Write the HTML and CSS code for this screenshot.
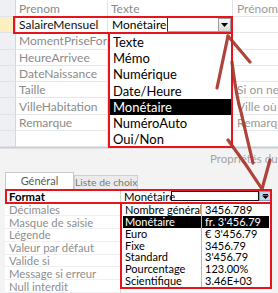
FILE: index.html
```html
<!DOCTYPE html>
<html lang="fr">
<head>
<meta charset="utf-8">
<title>Type de données Monétaire</title>
<link rel="stylesheet" href="styles.css">
</head>
<body>
<div class="screen">
  <div class="design">
    <div class="sel"></div><div class="cell muted">Prenom</div><div class="cell muted">Texte</div><div class="cell desc">Prénom</div>
    <div class="sel current"></div><div class="cell strong">SalaireMensuel</div>
    <div class="cell combo">
      <span class="combo-text">Monétaire</span><span class="combo-edit"></span>
      <span class="combo-btn"><svg width="7" height="4" viewBox="0 0 7 4"><path d="M0 0H7L3.5 4Z" fill="#000"/></svg></span>
    </div><div class="cell desc"></div>
    <div class="sel"></div><div class="cell muted">MomentPriseFor</div><div class="cell"></div><div class="cell desc"></div>
    <div class="sel"></div><div class="cell muted">HeureArrivee</div><div class="cell"></div><div class="cell desc"></div>
    <div class="sel"></div><div class="cell muted">DateNaissance</div><div class="cell"></div><div class="cell desc"></div>
    <div class="sel"></div><div class="cell muted">Taille</div><div class="cell"></div><div class="cell desc">Si on ne</div>
    <div class="sel"></div><div class="cell muted">VilleHabitation</div><div class="cell"></div><div class="cell desc">Ville où</div>
    <div class="sel"></div><div class="cell muted">Remarque</div><div class="cell"></div><div class="cell desc">Remarque</div>
    <div class="sel"></div><div class="cell"></div><div class="cell"></div><div class="cell desc"></div>
  </div>

  <div class="props">
    <div class="props-head"><span class="props-title">Propriétés du champ</span></div>
    <div class="tabs">
      <div class="tab active">Général</div>
      <div class="tab">Liste de choix</div>
    </div>
    <div class="sheet">
      <div class="plabel bold">Format</div>
      <div class="pvalue combo2">
        <span class="combo2-text">Monétaire</span><span class="combo2-edit"></span>
        <span class="combo2-btn"><svg width="7" height="5" viewBox="0 0 7 5"><path d="M1 0H6V1H1Z M0 1.5H7L3.5 5Z" fill="#000"/></svg></span>
      </div>
      <div class="plabel">Décimales</div><div class="pvalue"></div>
      <div class="plabel">Masque de saisie</div><div class="pvalue"></div>
      <div class="plabel">Légende</div><div class="pvalue"></div>
      <div class="plabel">Valeur par défaut</div><div class="pvalue"></div>
      <div class="plabel">Valide si</div><div class="pvalue"></div>
      <div class="plabel">Message si erreur</div><div class="pvalue"></div>
      <div class="plabel">Null interdit</div><div class="pvalue"></div>
    </div>
  </div>

  <ul class="type-list">
    <li>Texte</li>
    <li>Mémo</li>
    <li>Numérique</li>
    <li>Date/Heure</li>
    <li class="hl">Monétaire</li>
    <li>NuméroAuto</li>
    <li>Oui/Non</li>
  </ul>

  <div class="format-list">
    <div class="fl-row"><span class="fl-name">Nombre général</span><span class="fl-val">3456.789</span></div>
    <div class="fl-row hl"><span class="fl-name">Monétaire</span><span class="fl-val">fr. 3'456.79</span></div>
    <div class="fl-row"><span class="fl-name">Euro</span><span class="fl-val">€ 3'456.79</span></div>
    <div class="fl-row"><span class="fl-name">Fixe</span><span class="fl-val">3456.79</span></div>
    <div class="fl-row"><span class="fl-name">Standard</span><span class="fl-val">3'456.79</span></div>
    <div class="fl-row"><span class="fl-name">Pourcentage</span><span class="fl-val">123.00%</span></div>
    <div class="fl-row"><span class="fl-name">Scientifique</span><span class="fl-val">3.46E+03</span></div>
  </div>

  <div class="mark mark-row"></div>
  <div class="mark mark-format"></div>

  <svg class="arrows" width="278" height="293" viewBox="0 0 278 293">
    <g fill="none" stroke="#a8352b" stroke-width="3.2" stroke-linecap="round" stroke-linejoin="round" opacity="0.92">
      <path d="M217 88 L228 36"/>
      <path d="M228 36 L250 62"/>
      <path d="M232 62 Q236 95 241 112 Q247 138 253 163"/>
      <path d="M228 140 Q246 164 262 189"/>
      <path d="M270 160 L262 189"/>
    </g>
  </svg>
</div>
</body>
</html>
```

FILE: styles.css
```css
* { box-sizing: border-box; }
html, body { margin: 0; padding: 0; background: #fff; }
body { font-family: Lato, "Open Sans", "DejaVu Sans", sans-serif; }

.screen {
  position: relative;
  width: 278px;
  height: 293px;
  overflow: hidden;
  background: #fff;
}

/* ---------- table design grid ---------- */
.design {
  display: grid;
  grid-template-columns: 16px 92px 125px 45px;
  grid-template-rows: 17px;
  grid-auto-rows: 16.3px;
  font-size: 12px;
  border-bottom: 1px solid #c9ccd0;
}
.sel {
  background: #eef0f3;
  border-right: 1px solid #d4d8dd;
  border-bottom: 1px solid #dfe3e8;
}
.sel.current { background: #fcefc2; }
.cell {
  display: flex;
  align-items: center;
  padding-left: 3px;
  white-space: nowrap;
  overflow: hidden;
  border-right: 1px solid #dfe3e8;
  border-bottom: 1px solid #e4e7eb;
  color: #222;
}
.cell.muted { color: #8a8a8a; }
.cell.strong { color: #111; }
.cell.desc { color: #9a9a9a; border-right: none; padding-left: 4px; }

.combo { padding-left: 4px; position: relative; }
.combo-text { color: #000; width: 55px; }
.combo-edit {
  width: 51px;
  height: 14px;
  border-left: 1px solid #333;
  border-bottom: 1px solid #a8a8a8;
}
.combo-btn {
  width: 13px;
  height: 14px;
  display: flex;
  align-items: center;
  justify-content: center;
  background: linear-gradient(#f7f7f7, #d9d9d9);
  border: 1px solid #9c9c9c;
}

/* ---------- property pane ---------- */
.props {
  height: 145px;
  background: #f3f3f3;
  display: flex;
  flex-direction: column;
}
.props-head {
  height: 24px;
  padding: 3px 0 0 210px;
  white-space: nowrap;
  font-size: 11.5px;
  color: #a3a3a3;
  border-top: 1px solid #e0e0e0;
}
.tabs {
  height: 18px;
  display: flex;
  align-items: flex-end;
  padding-left: 5px;
}
.tab {
  height: 15px;
  width: 64px;
  font-size: 10.4px;
  line-height: 13px;
  color: #7a7a7a;
  background: #ebebeb;
  border: 1px solid #cfcfcf;
  border-bottom: none;
  text-align: center;
  white-space: nowrap;
}
.tab.active {
  height: 18px;
  width: 69px;
  font-size: 11px;
  line-height: 15px;
  background: #fff;
  color: #5a5a5a;
  border-color: #c8c8c8;
}
.sheet {
  flex: 1;
  margin-left: 5px;
  width: 267px;
  background: #fff;
  display: grid;
  grid-template-columns: 116px 151px;
  grid-template-rows: 13px;
  grid-auto-rows: 12.8px;
  font-size: 11.3px;
}
.plabel {
  display: flex;
  align-items: center;
  padding-left: 4px;
  color: #8e8e8e;
  border-right: 1px solid #d6d6d6;
  border-bottom: 1px solid #eef0f2;
  white-space: nowrap;
}
.plabel.bold { color: #000; font-weight: 700; }
.pvalue { border-bottom: 1px solid #eef0f2; }

.combo2 {
  display: flex;
  align-items: center;
  padding-left: 3px;
}
.combo2-text { width: 47px; color: #000; white-space: nowrap; }
.combo2-edit {
  width: 88px;
  height: 10px;
  border: 1px solid #111;
}
.combo2-btn {
  width: 12px;
  height: 10px;
  background: #bcd5ee;
  border: 1px solid #7f9db9;
  display: flex;
  align-items: center;
  justify-content: center;
}

/* ---------- dropdown lists ---------- */
.type-list {
  position: absolute;
  left: 108px;
  top: 32px;
  width: 125px;
  height: 116px;
  margin: 0;
  padding: 0;
  list-style: none;
  background: #fff;
  border: 2px solid #e8131c;
  font-size: 13px;
}
.type-list li {
  height: 16.2px;
  display: flex;
  align-items: center;
  padding-left: 3px;
  color: #000;
}
.type-list li.hl { background: #000; color: #fff; }

.format-list {
  position: absolute;
  left: 120px;
  top: 202px;
  width: 152px;
  height: 87px;
  background: #fff;
  border: 2px solid #e8131c;
  padding: 0 1px;
  font-size: 11px;
}
.fl-row {
  display: grid;
  grid-template-columns: 79px 1fr;
  height: 11.85px;
  line-height: 11.85px;
  color: #000;
  white-space: nowrap;
}
.fl-name { padding-left: 2px; border-right: 1px solid #b8b8b8; overflow: hidden; }
.fl-val { padding-left: 3px; }
.fl-row.hl { background: #000; color: #fff; }

/* ---------- annotations ---------- */
.mark {
  position: absolute;
  border: 2px solid #e8131c;
  pointer-events: none;
}
.mark-row { left: 13px; top: 16px; width: 220px; height: 18px; }
.mark-format { left: 5px; top: 189px; width: 267px; height: 15px; }

.arrows {
  position: absolute;
  left: 0;
  top: 0;
  pointer-events: none;
}
```
